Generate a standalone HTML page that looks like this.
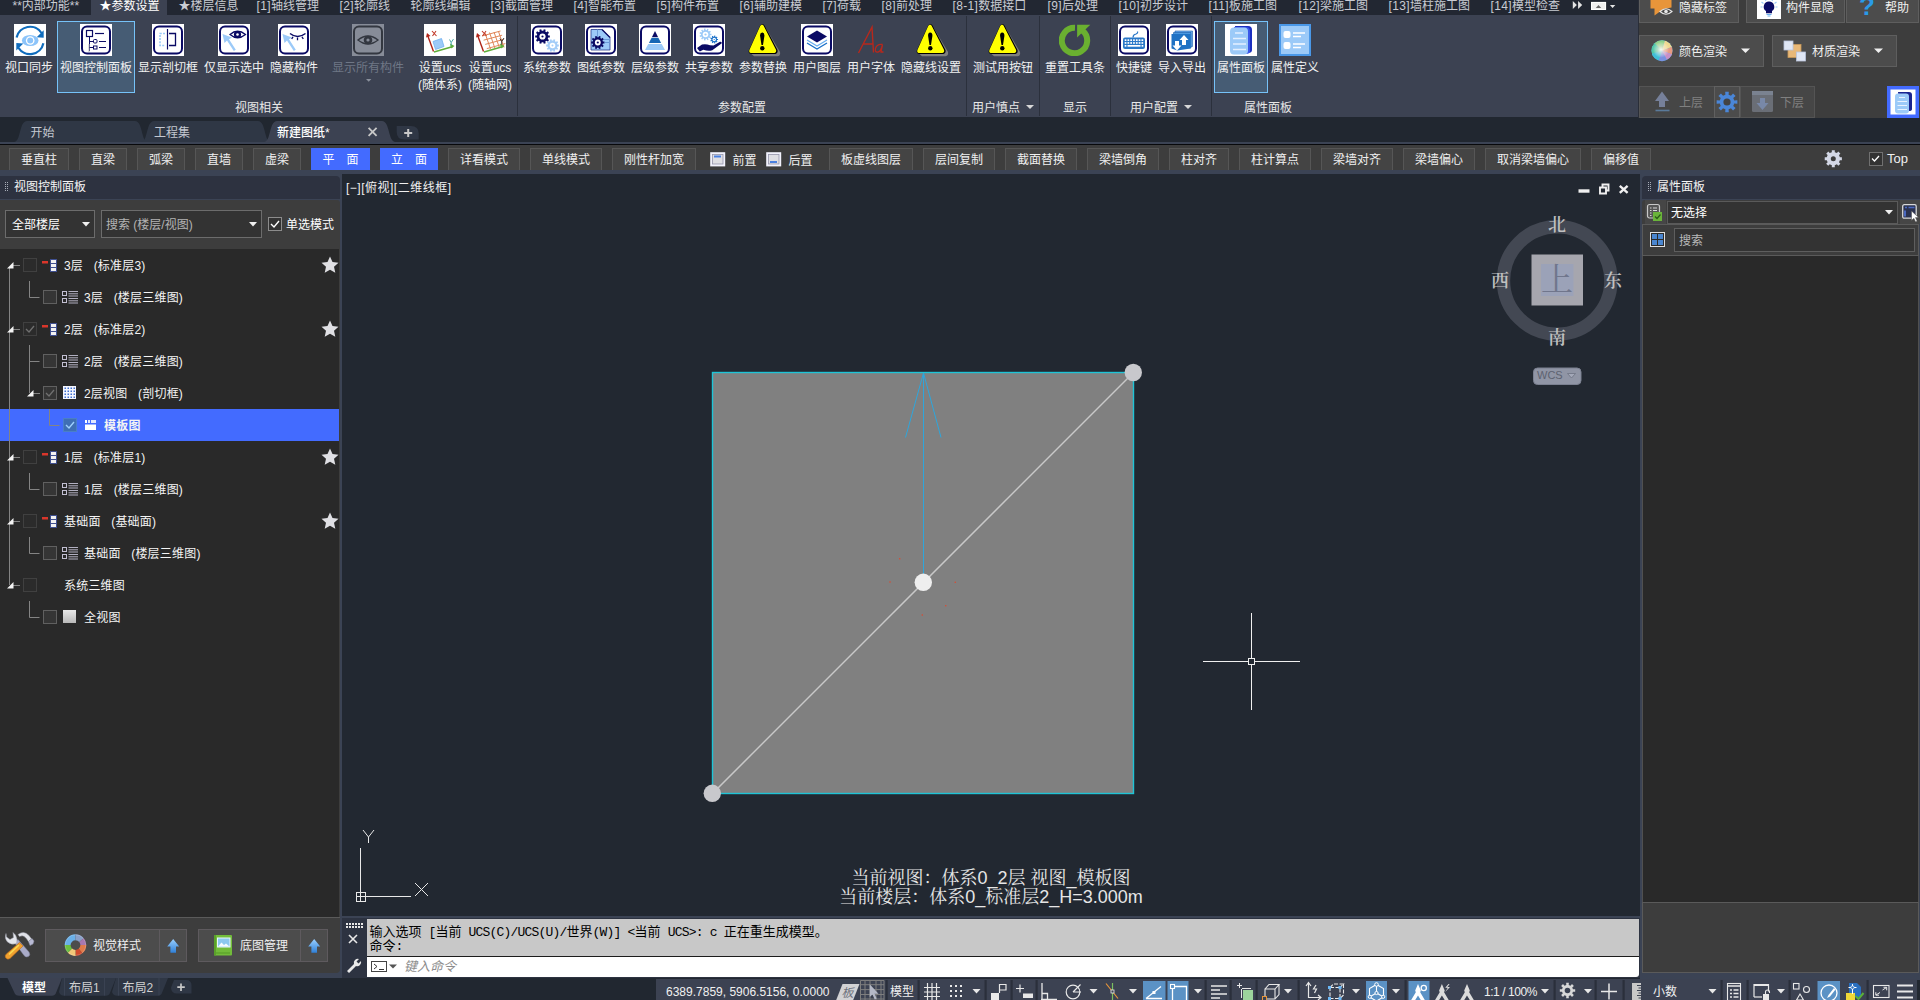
<!DOCTYPE html><html><head><meta charset="utf-8"><title>CAD</title><style>
*{box-sizing:border-box;margin:0;padding:0}
html,body{width:1920px;height:1000px;overflow:hidden;background:#222831}
body{font-family:"Liberation Sans","Noto Sans CJK SC",sans-serif;font-size:12px;color:#f0f0f0;position:relative;line-height:1}
.abs{position:absolute}
.t{position:absolute;white-space:nowrap;line-height:16px;height:16px}
.c{text-align:center}
#tabbar{left:0;top:0;width:1638px;height:15px;background:#222732}
#tabbar .t{top:-2px;color:#c9ccd3}
#ribbon{left:0;top:15px;width:1638px;height:102px;background:#3c4252}
.rb{position:absolute;top:9px;width:32px;height:32px}
.rl{position:absolute;top:45px;text-align:center;white-space:nowrap;line-height:17px;color:#f2f2f2;transform:translateX(-50%)}
.sep{position:absolute;top:1px;width:1.200px;height:100px;background:#2b303c}
.gl{position:absolute;top:85px;line-height:16px;white-space:nowrap;color:#e8e8e8;transform:translateX(-50%)}
.selbtn{position:absolute;background:#465c74;border:1px solid #76c2f8}
#quick{left:1638px;top:0;width:282px;height:118px;background:#3d3d3d;z-index:2;border-left:1px solid #2a2e38}
.qb{position:absolute;background:#4c4c4c;border:1px solid #5e5e5e}
.qd{background:#464646;border-color:#545454}
#doctabs{left:0;top:117px;width:1920px;height:25px;background:#212730}
#toolbar{left:0;top:142px;width:1920px;height:28px;background:#3d3d3d;border-top:2px solid #3b4354;overflow:hidden}
#toolbar:before{content:'';position:absolute;left:0;top:0;width:1920px;height:0.900px;background:#08090c}
.tb{position:absolute;top:4px;height:23px;background:#444;border:1px solid #565656;text-align:center;line-height:22px;color:#f0f0f0;white-space:nowrap}
.tb.blue{background:#436bff;border-color:#436bff;color:#fff}
.cb{position:absolute;width:14px;height:14px;border:1px solid #4a4a4a;background:#2a2a2a}
.row{position:absolute;left:0;width:340px;height:32px}
.row .t{top:8px;color:#f0f0f0}
</style></head><body>
<div id="tabbar" class="abs">
<div class="abs" style="left:91px;top:0;width:76px;height:15px;background:#3c4252"></div>
<span class="t" style="left:12.5px;color:#c9ccd3">**内部功能**</span>
<span class="t" style="left:99.5px;color:#ffffff">★参数设置</span>
<span class="t" style="left:178.5px;color:#c9ccd3">★楼层信息</span>
<span class="t" style="left:256.5px;color:#c9ccd3"><span style="letter-spacing:0.350px">[1]</span>轴线管理</span>
<span class="t" style="left:339.5px;color:#c9ccd3"><span style="letter-spacing:0.350px">[2]</span>轮廓线</span>
<span class="t" style="left:410.5px;color:#c9ccd3">轮廓线编辑</span>
<span class="t" style="left:490.5px;color:#c9ccd3"><span style="letter-spacing:0.350px">[3]</span>截面管理</span>
<span class="t" style="left:573.5px;color:#c9ccd3"><span style="letter-spacing:0.350px">[4]</span>智能布置</span>
<span class="t" style="left:656.5px;color:#c9ccd3"><span style="letter-spacing:0.350px">[5]</span>构件布置</span>
<span class="t" style="left:739.5px;color:#c9ccd3"><span style="letter-spacing:0.350px">[6]</span>辅助建模</span>
<span class="t" style="left:822.5px;color:#c9ccd3"><span style="letter-spacing:0.350px">[7]</span>荷载</span>
<span class="t" style="left:881.5px;color:#c9ccd3"><span style="letter-spacing:0.350px">[8]</span>前处理</span>
<span class="t" style="left:952.5px;color:#c9ccd3"><span style="letter-spacing:0.350px">[8-1]</span>数据接口</span>
<span class="t" style="left:1047.5px;color:#c9ccd3"><span style="letter-spacing:0.350px">[9]</span>后处理</span>
<span class="t" style="left:1118.5px;color:#c9ccd3"><span style="letter-spacing:0.350px">[10]</span>初步设计</span>
<span class="t" style="left:1208.5px;color:#c9ccd3"><span style="letter-spacing:0.350px">[11]</span>板施工图</span>
<span class="t" style="left:1298.5px;color:#c9ccd3"><span style="letter-spacing:0.350px">[12]</span>梁施工图</span>
<span class="t" style="left:1388.5px;color:#c9ccd3"><span style="letter-spacing:0.350px">[13]</span>墙柱施工图</span>
<span class="t" style="left:1490.5px;color:#c9ccd3"><span style="letter-spacing:0.350px">[14]</span>模型检查</span>
<svg class="abs" style="left:1570px;top:0" width="50" height="14"><path d="M2.800 1l4.100 4-4.100 4zM8.100 1l4.100 4-4.100 4z" fill="#e4e4e4"/><rect x="21" y="1.900" width="15.100" height="8.100" fill="#fff"/><rect x="22" y="2.900" width="13.100" height="6.100" fill="#f0f0f0"/><path d="M25.800 7.900l2.700-2.900 2.700 2.900z" fill="#666"/><path d="M39.900 5h5.400l-2.700 3.100z" fill="#e4e4e4"/></svg>
</div>
<div id="ribbon" class="abs">
<div class="selbtn" style="left:57px;top:6px;width:78px;height:72px"></div>
<div class="selbtn" style="left:1214px;top:6px;width:54px;height:72px"></div>
<svg class="abs" style="left:14px;top:9px" width="32" height="32" viewBox="0 0 32 32"><rect width="32" height="32" fill="#fff"/><path d="M2.600 13.600A13.700 13.700 0 0 1 27.500 9" fill="none" stroke="#0f6cbd" stroke-width="2.200"/><path d="M29.700 6.300v7.500l-7-.5z" fill="#0f6cbd"/><path d="M29.400 19.200A13.700 13.700 0 0 1 4.500 23.800" fill="none" stroke="#0f6cbd" stroke-width="2.200"/><path d="M2.300 26.500v-7.500l7 .5z" fill="#0f6cbd"/><ellipse cx="16.200" cy="16.500" rx="8.300" ry="5.500" fill="#8cc4fa"/><circle cx="16.200" cy="16.500" r="4.300" fill="#fff"/><circle cx="16.200" cy="16.500" r="3" fill="#8cc4fa"/></svg>
<svg class="abs" style="left:80px;top:9px" width="32" height="32" viewBox="0 0 32 32"><rect width="32" height="32" fill="#fff"/><rect x="2" y="2.500" width="28" height="27" rx="5" fill="#fff" stroke="#0a0a64" stroke-width="2"/><rect x="6.500" y="6.500" width="6" height="6" fill="#fff" stroke="#0a0a64" stroke-width="1.200"/><path d="M15 9.500h9" stroke="#0a0a64" stroke-width="1.200"/><path d="M9.500 13v14" stroke="#0a0a64" stroke-width="1"/><path d="M9 20v8" stroke="#bbb" stroke-width="1"/><path d="M9.500 17.500h4M9.500 23.500h4" stroke="#0a0a64"/><rect x="13.500" y="15.500" width="3.500" height="3.500" rx="1" fill="#fff" stroke="#0a0a64"/><rect x="13.500" y="22" width="3.500" height="3" fill="#fff" stroke="#0a0a64"/><path d="M19 17.500h7M19 23.500h7" stroke="#0a0a64" stroke-width="1.200"/></svg>
<svg class="abs" style="left:152px;top:9px" width="32" height="32" viewBox="0 0 32 32"><rect width="32" height="32" fill="#fff"/><rect x="2" y="2.500" width="28" height="27" rx="5" fill="#fff" stroke="#0a0a64" stroke-width="2"/><path d="M15.500 5v20.500" stroke="#0a0a64" stroke-width="1.200"/><path d="M17 9.500h6.500v12h-6.500" fill="none" stroke="#0a0a64" stroke-width="1.300"/><path d="M13 9.500h-5v12h5" fill="none" stroke="#9ccaf8" stroke-width="1.600" stroke-dasharray="2 1.200"/></svg>
<svg class="abs" style="left:218px;top:9px" width="32" height="32" viewBox="0 0 32 32"><rect width="32" height="32" fill="#fff"/><rect x="2" y="2.500" width="28" height="27" rx="5" fill="#fff" stroke="#0a0a64" stroke-width="2"/><path d="M4.500 10l9.500 3.500-3 1.800 6.800 10.500-2 1.300-6.800-10.500-2.500 2.400z" fill="#9ccaf8"/><path d="M12 10.500Q19.500 4 27.500 10.500Q19.500 17 12 10.500Z" fill="#fff" stroke="#0a0a64" stroke-width="1.300"/><circle cx="19.500" cy="10.500" r="3.600" fill="#0a0a64"/><circle cx="19.500" cy="10.500" r="1.300" fill="#fff"/></svg>
<svg class="abs" style="left:278px;top:9px" width="32" height="32" viewBox="0 0 32 32"><rect width="32" height="32" fill="#fff"/><rect x="2" y="2.500" width="28" height="27" rx="5" fill="#fff" stroke="#0a0a64" stroke-width="2"/><path d="M4.500 10l9.500 3.500-3 1.800 6.800 10.500-2 1.300-6.800-10.500-2.500 2.400z" fill="#9ccaf8"/><path d="M12 9.500Q19.500 15.500 27.500 9.500" fill="none" stroke="#0a0a64" stroke-width="1.500"/><path d="M15 12.800l-1.300 2.200M19.500 13.500v2.800M24 12.800l1.300 2.200" stroke="#0a0a64" stroke-width="1.300"/></svg>
<svg class="abs" style="left:352px;top:9px" width="32" height="32" viewBox="0 0 32 32"><rect width="32" height="32" fill="#878c98"/><rect x="2" y="2.500" width="28" height="27" rx="5" fill="#878c98" stroke="#333740" stroke-width="2"/><path d="M6 16Q16 8 26 16Q16 24 6 16Z" fill="#878c98" stroke="#333740" stroke-width="1.400"/><circle cx="16" cy="16" r="4.300" fill="#333740"/><circle cx="16" cy="16" r="1.600" fill="#878c98"/></svg>
<svg class="abs" style="left:424px;top:9px" width="32" height="32" viewBox="0 0 32 32"><rect width="32" height="32" fill="#fff"/><path d="M9.500 27.500L3.500 11" stroke="#b02418" stroke-width="1.400"/><path d="M2 13.500l1-4.500 3.500 3z" fill="#b02418"/><path d="M8 7l4.500 5M12 7l-3.500 5" stroke="#c23a2a" stroke-width="1.100"/><path d="M10 28L29 22.500" stroke="#5fae3a" stroke-width="1.500"/><path d="M30.500 22l-4.500-2.500 1 5z" fill="#5fae3a"/><path d="M25.500 15.500l1.700 3 2.300-3.500M27.200 18.500v3" fill="none" stroke="#3aa0a0" stroke-width="0.900"/><path d="M9 17.500l8.500-3 2.500 8-8.500 3z" fill="#9ccaf8" stroke="#6fb0f0" stroke-width="0.800"/></svg>
<svg class="abs" style="left:474px;top:9px" width="32" height="32" viewBox="0 0 32 32"><rect width="32" height="32" fill="#fff"/><g stroke="#e0875a" stroke-width="1"><path d="M11.0 9.0l5.500 16"/><path d="M15.5 8.5l5.500 16"/><path d="M20.0 8.0l5.500 16"/><path d="M24.5 7.5l5.500 16"/><path d="M8.0 12.0l18.500-5"/><path d="M9.6 16.2l18.500-5"/><path d="M11.2 20.4l18.500-5"/><path d="M12.8 24.6l18.500-5"/></g><path d="M9.500 27.500L3.500 11" stroke="#b02418" stroke-width="1.400"/><path d="M2 13.500l1-4.500 3.500 3z" fill="#b02418"/><path d="M8 7l4.500 5M12 7l-3.500 5" stroke="#c23a2a" stroke-width="1.100"/><path d="M10 28L29 22.500" stroke="#5fae3a" stroke-width="1.500"/><path d="M30.500 22l-4.500-2.500 1 5z" fill="#5fae3a"/><path d="M26 14.500l1.700 3 2.300-3.500M27.700 17.500v3" fill="none" stroke="#222" stroke-width="0.900"/></svg>
<svg class="abs" style="left:531px;top:9px" width="32" height="32" viewBox="0 0 32 32"><rect width="32" height="32" fill="#fff"/><rect x="2" y="2.500" width="28" height="27" rx="5" fill="#fff" stroke="#0a0a64" stroke-width="2"/><path d="M18.83 11.48L18.83 13.52L17.21 13.52L16.72 15.04L18.03 15.98L16.83 17.63L15.52 16.68L14.23 17.62L14.73 19.16L12.80 19.79L12.30 18.24L10.70 18.24L10.20 19.79L8.27 19.16L8.77 17.62L7.48 16.68L6.17 17.63L4.97 15.98L6.28 15.04L5.79 13.52L4.17 13.52L4.17 11.48L5.79 11.48L6.28 9.96L4.97 9.02L6.17 7.37L7.48 8.32L8.77 7.38L8.27 5.84L10.20 5.21L10.70 6.76L12.30 6.76L12.80 5.21L14.73 5.84L14.23 7.38L15.52 8.32L16.83 7.37L18.03 9.02L16.72 9.96L17.21 11.48Z" fill="#0a0a64"/><circle cx="11.5" cy="12.5" r="3.1" fill="#fff"/><circle cx="11.5" cy="12.5" r="1.1" fill="#0a0a64"/><path d="M27.84 20.62L27.84 22.38L26.42 22.38L26.00 23.69L27.15 24.51L26.11 25.94L24.97 25.10L23.85 25.91L24.30 27.26L22.62 27.80L22.19 26.45L20.81 26.45L20.38 27.80L18.70 27.26L19.15 25.91L18.03 25.10L16.89 25.94L15.85 24.51L17.00 23.69L16.58 22.38L15.16 22.38L15.16 20.62L16.58 20.62L17.00 19.31L15.85 18.49L16.89 17.06L18.03 17.90L19.15 17.09L18.70 15.74L20.38 15.20L20.81 16.55L22.19 16.55L22.62 15.20L24.30 15.74L23.85 17.09L24.97 17.90L26.11 17.06L27.15 18.49L26.00 19.31L26.42 20.62Z" fill="#a4cdf8"/><circle cx="21.5" cy="21.5" r="2.8" fill="#fff"/><circle cx="21.5" cy="21.5" r="1" fill="#a4cdf8"/></svg>
<svg class="abs" style="left:585px;top:9px" width="32" height="32" viewBox="0 0 32 32"><rect width="32" height="32" fill="#fff"/><rect x="2" y="2.500" width="28" height="27" rx="5" fill="#fff" stroke="#0a0a64" stroke-width="2"/><path d="M6 5.500h11l8 8v12.500h-19z" fill="#9ccaf8" stroke="#2a3a8a" stroke-width="0.800"/><path d="M12.500 5.500v10M6 15.500h19M20 18.500h5" stroke="#6a9ad8" stroke-width="1"/><path d="M17 5.500l8 8" stroke="#0a0a64" stroke-width="1.200"/><path d="M19.44 17.58L19.44 19.42L17.92 19.41L17.48 20.77L18.71 21.65L17.63 23.15L16.41 22.25L15.25 23.09L15.73 24.53L13.97 25.10L13.52 23.65L12.08 23.65L11.63 25.10L9.87 24.53L10.35 23.09L9.19 22.25L7.97 23.15L6.89 21.65L8.12 20.77L7.68 19.41L6.16 19.42L6.16 17.58L7.68 17.59L8.12 16.23L6.89 15.35L7.97 13.85L9.19 14.75L10.35 13.91L9.87 12.47L11.63 11.90L12.08 13.35L13.52 13.35L13.97 11.90L15.73 12.47L15.25 13.91L16.41 14.75L17.63 13.85L18.71 15.35L17.48 16.23L17.92 17.59Z" fill="#0a0a64"/><circle cx="12.8" cy="18.5" r="2.9" fill="#fff"/><circle cx="12.8" cy="18.5" r="1.1" fill="#0a0a64"/></svg>
<svg class="abs" style="left:639px;top:9px" width="32" height="32" viewBox="0 0 32 32"><rect width="32" height="32" fill="#fff"/><rect x="2" y="2.500" width="28" height="27" rx="5" fill="#fff" stroke="#0a0a64" stroke-width="2"/><path d="M16 7l3 6h-6z" fill="#0a0a64"/><path d="M12.500 14h7l2.600 5h-12.200z" fill="#1767b5"/><path d="M12.700 13.500h6.600" stroke="#b8c8e0"/><path d="M9.300 20h13.400l3.300 6h-20z" fill="#9ccaf8"/></svg>
<svg class="abs" style="left:693px;top:9px" width="32" height="32" viewBox="0 0 32 32"><rect width="32" height="32" fill="#fff"/><rect x="2" y="2.500" width="28" height="27" rx="5" fill="#fff" stroke="#0a0a64" stroke-width="2"/><path d="M18.45 9.75L18.45 11.25L16.94 11.22L16.62 12.30L17.91 13.09L17.10 14.35L15.85 13.50L15.00 14.24L15.66 15.60L14.29 16.23L13.69 14.84L12.58 15.00L12.40 16.50L10.91 16.29L11.16 14.80L10.13 14.33L9.17 15.49L8.03 14.51L9.05 13.39L8.44 12.44L7.00 12.90L6.58 11.46L8.04 11.06L8.04 9.94L6.58 9.54L7.00 8.10L8.44 8.56L9.05 7.61L8.03 6.49L9.17 5.51L10.13 6.67L11.16 6.20L10.91 4.71L12.40 4.50L12.58 6.00L13.69 6.16L14.29 4.77L15.66 5.40L15.00 6.76L15.85 7.50L17.10 6.65L17.91 7.91L16.62 8.70L16.94 9.78Z" fill="#9ccaf8"/><circle cx="12.5" cy="10.5" r="2.8" fill="#fff"/><circle cx="12.5" cy="10.5" r="1.1" fill="#9ccaf8"/><path d="M25.05 14.90L25.05 16.10L24.04 16.06L23.74 16.90L24.54 17.52L23.77 18.43L23.02 17.76L22.25 18.20L22.46 19.19L21.28 19.40L21.14 18.40L20.27 18.25L19.79 19.14L18.76 18.54L19.29 17.68L18.72 17.00L17.78 17.38L17.37 16.26L18.33 15.94L18.33 15.06L17.37 14.74L17.78 13.62L18.72 14.00L19.29 13.32L18.76 12.46L19.79 11.86L20.27 12.75L21.14 12.60L21.28 11.60L22.46 11.81L22.25 12.80L23.02 13.24L23.77 12.57L24.54 13.48L23.74 14.10L24.04 14.94Z" fill="#1a70c8"/><circle cx="21.2" cy="15.5" r="1.7" fill="#fff"/><circle cx="21.2" cy="15.5" r="0.6" fill="#1a70c8"/><path d="M4 24l5-3.500q4-1 8 .8l3.500.2 6.500-3.800q2-.3 1.800 1.500l-9.500 7q-4 1.500-9-.5l-3.500 1.800z" fill="#0a0a64"/></svg>
<svg class="abs" style="left:746.5px;top:9px" width="34" height="33" viewBox="0 0 34 33"><path d="M18.500 3.500L33 28Q33.600 31.800 30.500 32.300L7 32.300L4.500 30Z" fill="#808080"/><path d="M15 0.300Q16.500 -0.200 17.500 1.500L30.500 26Q31.200 29.500 28.500 30L4.500 30Q1 29.800 1.800 26.500L13 1.800Q13.800 0.500 15 0.300Z" fill="#000"/><path d="M14.600 0.800Q15.800 0.300 16.500 1.600L29 25.800Q29.800 28.600 27.500 29L3.800 29Q1.600 28.600 2.400 26L13.200 2Q13.800 1 14.600 0.800Z" fill="#ffff00"/><path d="M15.200 8.600Q12.800 8.800 13.100 12L14.500 21H16L17.400 12Q17.600 8.800 15.200 8.600Z" fill="#000"/><circle cx="15.300" cy="24.200" r="2.200" fill="#000"/></svg>
<svg class="abs" style="left:801px;top:9px" width="32" height="32" viewBox="0 0 32 32"><rect width="32" height="32" fill="#fff"/><rect x="2" y="2.500" width="28" height="27" rx="5" fill="#fff" stroke="#0a0a64" stroke-width="2"/><path d="M16 6.500l10 6-10 6-10-6z" fill="#0a0a64"/><path d="M6 16l10 6 10-6" fill="none" stroke="#6aaef0" stroke-width="1.300"/><path d="M6 19l10 6 10-6" fill="none" stroke="#1a70c8" stroke-width="1.300"/></svg>
<svg class="abs" style="left:855px;top:9px" width="32" height="32" viewBox="0 0 32 32"><path d="M3.500 29L17 3l1.500 25.500M8.500 20h9.500" fill="none" stroke="#b8281c" stroke-width="1.400"/><path d="M27.500 20.500q-5.500-1-7 4-1 4 2.500 3.500 3-.5 4.500-7.500l-1.500 7.500h2.500" fill="none" stroke="#b8281c" stroke-width="1.300"/></svg>
<svg class="abs" style="left:914.5px;top:9px" width="34" height="33" viewBox="0 0 34 33"><path d="M18.500 3.500L33 28Q33.600 31.800 30.500 32.300L7 32.300L4.500 30Z" fill="#808080"/><path d="M15 0.300Q16.500 -0.200 17.500 1.500L30.500 26Q31.200 29.500 28.500 30L4.500 30Q1 29.800 1.800 26.500L13 1.800Q13.800 0.500 15 0.300Z" fill="#000"/><path d="M14.600 0.800Q15.800 0.300 16.500 1.600L29 25.800Q29.800 28.600 27.500 29L3.800 29Q1.600 28.600 2.400 26L13.200 2Q13.800 1 14.600 0.800Z" fill="#ffff00"/><path d="M15.200 8.600Q12.800 8.800 13.100 12L14.500 21H16L17.400 12Q17.600 8.800 15.200 8.600Z" fill="#000"/><circle cx="15.300" cy="24.200" r="2.200" fill="#000"/></svg>
<svg class="abs" style="left:986.5px;top:9px" width="34" height="33" viewBox="0 0 34 33"><path d="M18.500 3.500L33 28Q33.600 31.800 30.500 32.300L7 32.300L4.500 30Z" fill="#808080"/><path d="M15 0.300Q16.500 -0.200 17.500 1.500L30.500 26Q31.200 29.500 28.500 30L4.500 30Q1 29.800 1.800 26.500L13 1.800Q13.800 0.500 15 0.300Z" fill="#000"/><path d="M14.600 0.800Q15.800 0.300 16.500 1.600L29 25.800Q29.800 28.600 27.500 29L3.800 29Q1.600 28.600 2.400 26L13.200 2Q13.800 1 14.600 0.800Z" fill="#ffff00"/><path d="M15.200 8.600Q12.800 8.800 13.100 12L14.500 21H16L17.400 12Q17.600 8.800 15.200 8.600Z" fill="#000"/><circle cx="15.300" cy="24.200" r="2.200" fill="#000"/></svg>
<svg class="abs" style="left:1059px;top:9px" width="32" height="32" viewBox="0 0 32 32"><path d="M16 3.800A12.700 12.700 0 1 0 23.660 6.770" fill="none" stroke="#6ab030" stroke-width="6"/><path d="M18.100 0.800h13.200l-13.200 12.600z" fill="#6ab030"/></svg>
<svg class="abs" style="left:1118px;top:9px" width="32" height="32" viewBox="0 0 32 32"><rect width="32" height="32" fill="#fff"/><rect x="2" y="2.500" width="28" height="27" rx="5" fill="#fff" stroke="#0a0a64" stroke-width="2"/><rect x="5" y="13.500" width="22" height="11.500" rx="2" fill="#2a78c8"/><path d="M15 13.500q0-3 3-3.500 2-.5 1.500-2.500" fill="none" stroke="#2a78c8" stroke-width="1.200"/><g fill="#fff"><rect x="6.7" y="15.3" width="1.700" height="1.700"/><rect x="9.5" y="15.3" width="1.700" height="1.700"/><rect x="12.3" y="15.3" width="1.700" height="1.700"/><rect x="15.1" y="15.3" width="1.700" height="1.700"/><rect x="17.9" y="15.3" width="1.700" height="1.700"/><rect x="20.7" y="15.3" width="1.700" height="1.700"/><rect x="23.5" y="15.3" width="1.700" height="1.700"/><rect x="6.7" y="18.1" width="1.700" height="1.700"/><rect x="9.5" y="18.1" width="1.700" height="1.700"/><rect x="12.3" y="18.1" width="1.700" height="1.700"/><rect x="15.1" y="18.1" width="1.700" height="1.700"/><rect x="17.9" y="18.1" width="1.700" height="1.700"/><rect x="20.7" y="18.1" width="1.700" height="1.700"/><rect x="23.5" y="18.1" width="1.700" height="1.700"/><rect x="6.700" y="21" width="1.700" height="1.700"/><rect x="9.500" y="21" width="13" height="1.700"/><rect x="23.600" y="21" width="1.700" height="1.700"/></g></svg>
<svg class="abs" style="left:1166px;top:9px" width="32" height="32" viewBox="0 0 32 32"><rect width="32" height="32" fill="#fff"/><rect x="2" y="2.500" width="28" height="27" rx="5" fill="#fff" stroke="#0a0a64" stroke-width="2"/><path d="M9 7h17.500v15.500l-17.500 0z" fill="#6fb0f0" stroke="#1a5aa8" stroke-width="0.600"/><path d="M7.500 8.500h17.500v15.500l-17.500 0z" fill="#4a98e0" stroke="#1a5aa8" stroke-width="0.600"/><path d="M5.500 10h19v14.500l-13 2-6-2z" fill="#1f72c4"/><path d="M18 11l4.500 5h-2.500v5h-4v-5h-2.500z" fill="#fff"/><path d="M11 26.500l-4.500-5h2.500v-4.500h4v4.500h2.500z" fill="#fff"/></svg>
<svg class="abs" style="left:1225px;top:9px" width="32" height="32" viewBox="0 0 32 32"><rect width="32" height="32" fill="#fff"/><path d="M10 2h13q4 0 4 4v20q0 3-4 3h-10z" fill="#1a2fc0"/><path d="M9 3h12q4 0 4 4v20q0 3-4 3h-10z" fill="#3a58e8"/><rect x="5" y="3.500" width="18" height="27" rx="4" fill="#9ccaf8"/><path d="M10 9h8M8 14.500h13M8 20h13M8 25.500h13" stroke="#e4f0ff" stroke-width="1.300"/></svg>
<svg class="abs" style="left:1279px;top:9px" width="32" height="32" viewBox="0 0 32 32"><rect width="32" height="32" fill="#9ccaf8"/><rect x="1" y="1" width="30" height="30" fill="none" stroke="#4a98e8" stroke-width="2"/><rect x="4.500" y="7" width="7" height="7" rx="2" fill="#fff"/><rect x="4.500" y="18" width="7" height="7" rx="2" fill="#fff"/><path d="M14 9h12M14 12.500h8M14 20h12M14 23.500h8" stroke="#fff" stroke-width="1.600"/></svg>
<div class="rl" style="left:29px;">视口同步</div>
<div class="rl" style="left:96px;">视图控制面板</div>
<div class="rl" style="left:168px;">显示剖切框</div>
<div class="rl" style="left:234px;">仅显示选中</div>
<div class="rl" style="left:294px;">隐藏构件</div>
<div class="rl" style="left:368px;color:#6f7786">显示所有构件</div>
<div class="rl" style="left:440px;">设置ucs<br>(随体系)</div>
<div class="rl" style="left:490px;">设置ucs<br>(随轴网)</div>
<div class="rl" style="left:547px;">系统参数</div>
<div class="rl" style="left:601px;">图纸参数</div>
<div class="rl" style="left:655px;">层级参数</div>
<div class="rl" style="left:709px;">共享参数</div>
<div class="rl" style="left:763px;">参数替换</div>
<div class="rl" style="left:817px;">用户图层</div>
<div class="rl" style="left:871px;">用户字体</div>
<div class="rl" style="left:931px;">隐藏线设置</div>
<div class="rl" style="left:1003px;">测试用按钮</div>
<div class="rl" style="left:1075px;">重置工具条</div>
<div class="rl" style="left:1134px;">快捷键</div>
<div class="rl" style="left:1182px;">导入导出</div>
<div class="rl" style="left:1241px;">属性面板</div>
<div class="rl" style="left:1295px;">属性定义</div>
<svg class="abs" style="left:365.500px;top:64px" width="6" height="4"><path d="M0 0h5.400l-2.700 2.800z" fill="#8a909c"/></svg>
<div class="sep" style="left:517px"></div>
<div class="sep" style="left:966px"></div>
<div class="sep" style="left:1039px"></div>
<div class="sep" style="left:1110px"></div>
<div class="sep" style="left:1211px"></div>
<div class="gl" style="left:259px">视图相关</div>
<div class="gl" style="left:742px">参数配置</div>
<div class="gl" style="left:996px">用户慎点</div>
<div class="gl" style="left:1075px">显示</div>
<div class="gl" style="left:1154px">用户配置</div>
<div class="gl" style="left:1268px">属性面板</div>
<svg class="abs" style="left:1026px;top:90px" width="8" height="5"><path d="M0 0h8l-4 4z" fill="#d8d8d8"/></svg>
<svg class="abs" style="left:1184px;top:90px" width="8" height="5"><path d="M0 0h8l-4 4z" fill="#d8d8d8"/></svg>
</div>
<div id="quick" class="abs">
<div class="qb" style="left:0px;top:-2px;width:99.500px;height:25px"></div><span class="t" style="left:40px;top:0px">隐藏标签</span>
<div class="qb" style="left:107px;top:-2px;width:98.500px;height:25px"></div><span class="t" style="left:147px;top:0px">构件显隐</span>
<div class="qb" style="left:207px;top:-2px;width:73px;height:25px"></div><span class="t" style="left:246px;top:0px">帮助</span>
<div class="qb" style="left:0px;top:35px;width:125px;height:32px"></div><span class="t" style="left:40px;top:44px">颜色渲染</span>
<div class="qb" style="left:133px;top:35px;width:125px;height:32px"></div><span class="t" style="left:173px;top:44px">材质渲染</span>
<div class="qb qd" style="left:0px;top:86px;width:75.500px;height:32px"></div><span class="t" style="left:40px;top:95px;color:#808080">上层</span>
<div class="qb" style="left:75px;top:86px;width:26px;height:32px;border-color:#606060"></div>
<div class="qb qd" style="left:101px;top:86px;width:75px;height:32px"></div><span class="t" style="left:141px;top:95px;color:#808080">下层</span>
<div class="abs" style="left:248px;top:86px;width:32px;height:32px;background:#436bff"></div>
<svg class="abs" style="left:-1px;top:0" width="282" height="118">
<path d="M12.500 0h21v7.500l-8 1.500-9 6.500v-7h-4z" fill="#e8953a"/>
<path d="M22 11.500q6-5.500 12 0q-6 5.500-12 0z" fill="#4a4a4a" stroke="#e8e8e8" stroke-width="1.100"/><circle cx="28" cy="11.500" r="1.800" fill="#e8e8e8"/>
<rect x="119" y="0" width="24" height="19" fill="#fff"/><path d="M131 1.500a5.200 5.200 0 0 1 3 9.500v2.200h-6v-2.200a5.200 5.200 0 0 1 3-9.500z" fill="#0a0a64"/><path d="M128.500 14.500h5M129.500 16h3" stroke="#6aaef0" stroke-width="1"/><path d="M123.500 2l2 1.500M138.500 2l-2 1.500M122.500 7h2M139.500 7h-2M127.500 0l.5 1M134.500 0l-.5 1" stroke="#9ccaf8" stroke-width="1.200"/>
<defs><radialGradient id="cb1" cx="0.45" cy="0.45" r="0.55"><stop offset="0" stop-color="#fff" stop-opacity="0.950"/><stop offset="0.300" stop-color="#f4ecdc" stop-opacity="0.600"/><stop offset="0.700" stop-color="#fff" stop-opacity="0"/></radialGradient><clipPath id="cbc"><circle cx="24" cy="50.700" r="10.500"/></clipPath></defs>
<g clip-path="url(#cbc)"><rect x="13" y="40" width="22" height="22" fill="#58b8e8"/><path d="M24 50.700L13 40h14z" fill="#8fd08a"/><path d="M24 50.700L27 40h9v6z" fill="#f0d890"/><path d="M24 50.700L36 46v9z" fill="#e89a80"/><path d="M24 50.700L36 55v7h-6z" fill="#c890c8"/><path d="M24 50.700L30 62h-10z" fill="#7a90e0"/><path d="M24 50.700L20 62h-7v-8z" fill="#40c0d8"/><path d="M24 50.700L13 54v-14z" fill="#50c8a8"/><circle cx="24" cy="50.700" r="10.500" fill="url(#cb1)"/></g>
<rect x="150" y="44.500" width="13" height="13" fill="#e8b878" stroke="#c89858" stroke-width="0.800"/><rect x="146" y="41" width="9" height="9" fill="#dfe6f4" stroke="#b8c4dc" stroke-width="0.800"/><rect x="158.500" y="52" width="9" height="9" fill="#dfe6f4" stroke="#b8c4dc" stroke-width="0.800"/>
<path d="M103 48.500h9l-4.500 4.500z" fill="#f0f0f0"/><path d="M236 48.500h9l-4.500 4.500z" fill="#f0f0f0"/>
<path d="M24 91.500l7 9.500h-4v6h-6v-6h-4z" fill="#76809a"/><path d="M17.500 110.500h14" stroke="#5a7a9a" stroke-width="1.600"/>
<path d="M99.34 100.19L99.34 103.81L96.22 103.61L95.25 105.97L97.59 108.04L95.04 110.59L92.97 108.25L90.61 109.22L90.81 112.34L87.19 112.34L87.39 109.22L85.03 108.25L82.96 110.59L80.41 108.04L82.75 105.97L81.78 103.61L78.66 103.81L78.66 100.19L81.78 100.39L82.75 98.03L80.41 95.96L82.96 93.41L85.03 95.75L87.39 94.78L87.19 91.66L90.81 91.66L90.61 94.78L92.97 95.75L95.04 93.41L97.59 95.96L95.25 98.03L96.22 100.39Z" fill="#4a86d8"/><circle cx="89" cy="102" r="3.6" fill="#434343"/>
<rect x="114" y="91" width="21" height="21" rx="1.500" fill="#6a6e76"/><rect x="114" y="91" width="21" height="4" fill="#7a8290"/><path d="M124.500 110l-6-7h3.500v-5h5v5h3.500z" fill="#7888a8"/>
<rect x="252.500" y="89.500" width="25" height="25" fill="#fff"/><path d="M260 92h11q3 0 3 3v14q0 2-3 2h-9z" fill="#1a2490"/><rect x="257" y="93.500" width="14" height="20" rx="3" fill="#9ccaf8"/><path d="M261 97.500h6M259.500 101.500h9.500M259.500 105.500h9.500M259.500 109.500h9.500" stroke="#e8f2ff" stroke-width="1"/>
</svg>
<span class="t" style="left:220px;top:-7px;font-size:26px;line-height:26px;height:26px;font-weight:bold;color:#2a9ae8">?</span>
</div>
<div id="doctabs" class="abs">
<svg class="abs" style="left:0;top:0" width="460" height="28"><path d="M14 25 C21 25 19 4 27 4 L135 4 C143 4 141 25 148 25 Z" fill="#2f3745"/><path d="M141 25 C148 25 146 4 154 4 L258 4 C266 4 264 25 271 25 Z" fill="#2f3745"/><path d="M264 25 C271 25 269 4 277 4 L382 4 C390 4 388 25 395.500 25 Z" fill="#3c4252"/><path d="M396.700 9L411 9Q418.700 9 418.700 16.500L418.700 22.600L404.500 22.600Q396.700 22.600 396.700 15Z" fill="#2f3745"/><path d="M368.600 10.800l8 8M376.600 10.800l-8 8" stroke="#c8c8c8" stroke-width="1.800"/><path d="M404.200 16h8M408.200 12v8" stroke="#c8c8c8" stroke-width="2"/></svg>
<span class="t" style="left:30.500px;top:7.700px;color:#c4c8d0">开始</span>
<span class="t" style="left:154px;top:7.700px;color:#c4c8d0">工程集</span>
<span class="t" style="left:277px;top:7.700px;color:#fff;font-weight:500">新建图纸*</span>
</div>
<div id="toolbar" class="abs">
<div class="tb" style="left:9px;width:60px">垂直柱</div>
<div class="tb" style="left:79px;width:48px">直梁</div>
<div class="tb" style="left:137px;width:48px">弧梁</div>
<div class="tb" style="left:195px;width:48px">直墙</div>
<div class="tb" style="left:253px;width:48px">虚梁</div>
<div class="tb blue" style="left:311px;width:59px">平&emsp;面</div>
<div class="tb blue" style="left:380px;width:58px">立&emsp;面</div>
<div class="tb" style="left:448px;width:72px">详看模式</div>
<div class="tb" style="left:530px;width:72px">单线模式</div>
<div class="tb" style="left:612px;width:84px">刚性杆加宽</div>
<div class="tb" style="left:829px;width:84px">板虚线图层</div>
<div class="tb" style="left:923px;width:72px">层间复制</div>
<div class="tb" style="left:1005px;width:72px">截面替换</div>
<div class="tb" style="left:1087px;width:72px">梁墙倒角</div>
<div class="tb" style="left:1169px;width:60px">柱对齐</div>
<div class="tb" style="left:1239px;width:72px">柱计算点</div>
<div class="tb" style="left:1321px;width:72px">梁墙对齐</div>
<div class="tb" style="left:1403px;width:72px">梁墙偏心</div>
<div class="tb" style="left:1485px;width:96px">取消梁墙偏心</div>
<div class="tb" style="left:1591px;width:60px">偏移值</div>
<svg class="abs" style="left:710px;top:8px" width="16" height="16"><rect x="0.200" y="0.200" width="15" height="14.200" fill="#f2f2fc"/><rect x="2.500" y="2.500" width="10.500" height="9.500" fill="#dfdfe4" stroke="#9494aa" stroke-width="0.800"/><rect x="4" y="3.500" width="7" height="2" fill="#4a80e0"/></svg>
<span class="t" style="left:732.500px;top:9px">前置</span>
<svg class="abs" style="left:766px;top:8px" width="16" height="16"><rect x="0.200" y="0.200" width="15" height="14.200" fill="#f2f2fc"/><rect x="2.500" y="2.500" width="10.500" height="9.500" fill="#dfdfe4" stroke="#9494aa" stroke-width="0.800"/><rect x="4" y="9" width="7" height="2" fill="#4a80e0"/></svg>
<span class="t" style="left:788.500px;top:9px">后置</span>
<svg class="abs" style="left:1822px;top:4px" width="22" height="22"><path d="M19.87 9.20L19.87 12.20L17.84 12.16L16.96 14.29L18.42 15.70L16.30 17.82L14.89 16.36L12.76 17.24L12.80 19.27L9.80 19.27L9.84 17.24L7.71 16.36L6.30 17.82L4.18 15.70L5.64 14.29L4.76 12.16L2.73 12.20L2.73 9.20L4.76 9.24L5.64 7.11L4.18 5.70L6.30 3.58L7.71 5.04L9.84 4.16L9.80 2.13L12.80 2.13L12.76 4.16L14.89 5.04L16.30 3.58L18.42 5.70L16.96 7.11L17.84 9.24Z" fill="#d4d8e6"/><circle cx="11.3" cy="10.7" r="2.5" fill="#3d3d3d"/></svg>
<div class="abs" style="left:1869px;top:8px;width:13.700px;height:13.700px;border:1px solid #707070;background:#333"></div><svg class="abs" style="left:1869px;top:8px" width="13" height="13"><path d="M3 6.500l2.500 2.500 4.500-5" stroke="#fff" stroke-width="1.300" fill="none"/></svg>
<span class="t" style="left:1887px;top:7px;font-size:13px">Top</span>
</div>
<div class="abs" style="left:0;top:170px;width:1920px;height:4px;background:#3b4354"></div>
<div class="abs" style="left:0;top:170px;width:342px;height:748px;background:#3b4354"></div>
<div class="abs" style="left:0;top:176px;width:339.500px;height:22.500px;background:#2d3240;border-radius:0 4px 0 0"></div>
<svg class="abs" style="left:4px;top:181px" width="6" height="12"><g fill="#a8adb8"><rect x="1" y="1" width="1" height="1"/><rect x="3" y="1" width="1" height="1"/><rect x="1" y="3" width="1" height="1"/><rect x="3" y="3" width="1" height="1"/><rect x="1" y="5" width="1" height="1"/><rect x="3" y="5" width="1" height="1"/><rect x="1" y="7" width="1" height="1"/><rect x="3" y="7" width="1" height="1"/><rect x="1" y="9" width="1" height="1"/><rect x="3" y="9" width="1" height="1"/></g></svg>
<span class="t" style="left:14px;top:179px;color:#f4f4f4">视图控制面板</span>
<div class="abs" style="left:0;top:199.500px;width:340px;height:718.500px;background:#3d3d3d;border-radius:0 3px 0 0"></div>
<div class="abs" style="left:5px;top:210px;width:90px;height:28px;border:1px solid #6c6c6c;background:#333"></div>
<span class="t" style="left:12px;top:217px;color:#fff">全部楼层</span>
<svg class="abs" style="left:82px;top:221.500px" width="8" height="5"><path d="M0 0h8l-4 4.500z" fill="#f0f0f0"/></svg>
<div class="abs" style="left:101px;top:210px;width:161px;height:28px;border:1px solid #6c6c6c;background:#333"></div>
<span class="t" style="left:106px;top:217px;color:#b4b4b4">搜索 (楼层/视图)</span>
<svg class="abs" style="left:249px;top:221.500px" width="8" height="5"><path d="M0 0h8l-4 4.500z" fill="#f0f0f0"/></svg>
<div class="abs" style="left:268px;top:217px;width:14px;height:14px;border:1px solid #8c8c8c;background:#333"></div><svg class="abs" style="left:268px;top:217px" width="14" height="14"><path d="M3 7l3 3 5-6" stroke="#fff" stroke-width="1.400" fill="none"/></svg>
<span class="t" style="left:286px;top:217px;color:#fff">单选模式</span>
<div class="abs" style="left:0;top:249px;width:338.800px;height:668px;background:#292929"></div>
<div class="abs" style="left:0;top:409px;width:338.800px;height:32px;background:#436bff"></div>
<svg class="abs" style="left:0;top:249px" width="120" height="400" fill="none" stroke="#848484" stroke-width="1"><path d="M9.500 19v317"/><path d="M13 16.500h7M13 80.500h7M13 208.500h7M13 272.500h7M13 336.500h7"/><path d="M29.500 32v16.500h10M29.500 96v48M29.500 112.500h10M33 144.500h7M29.500 224v16.500h10M29.500 288v16.500h10M29.500 352v16.500h10"/><path d="M49.500 160v16.500h10"/></svg>
<svg class="abs" style="left:7px;top:261.5px" width="7" height="7"><path d="M6.500 0v6.500h-6.500z" fill="#f4f4f4"/></svg>
<div class="cb" style="left:23px;top:258px;border-color:#404040;background:#2b2b2b"></div>
<svg class="abs" style="left:42px;top:258.7px" width="16" height="14"><rect x="0" y="2" width="6" height="2.500" fill="#d9362b"/><rect x="8" y="0" width="7" height="13" fill="#3f4f8f"/><rect x="9" y="1" width="5" height="3" fill="#f2f2f2"/><rect x="9" y="5" width="5" height="3" fill="#f2f2f2"/><rect x="9" y="9" width="5" height="3" fill="#f2f2f2"/></svg>
<span class="t" style="left:64px;top:257.8px;color:#f4f4f4;letter-spacing:0.200px">3层 &nbsp;&nbsp;(标准层3)</span>
<svg class="abs" style="left:320.500px;top:256px" width="18" height="17"><path d="M9 0.500l2.500 5.600 6 .6-4.500 4.100 1.300 6-5.300-3.100-5.300 3.100 1.300-6L0.500 6.700l6-.6z" fill="#e0e0e4"/></svg>
<div class="cb" style="left:43px;top:290px;border-color:#606060;background:#353535"></div>
<svg class="abs" style="left:62px;top:290.5px" width="17" height="13" fill="none" stroke="#c2bfd2"><rect x="0.500" y="0.500" width="4" height="4"/><rect x="0.500" y="7.500" width="4" height="4"/><path d="M6.500 0.500h9.500M6.500 2.800h9.500M6.500 5h9.500M6.500 7.500h9.500M6.500 9.800h9.500M6.500 12h9.500" stroke-width="0.900"/></svg>
<span class="t" style="left:84px;top:289.8px;color:#f4f4f4;letter-spacing:0.200px">3层 &nbsp;&nbsp;(楼层三维图)</span>
<svg class="abs" style="left:7px;top:325.5px" width="7" height="7"><path d="M6.500 0v6.500h-6.500z" fill="#f4f4f4"/></svg>
<div class="cb" style="left:23px;top:322px;border-color:#404040;background:#2b2b2b"></div><svg class="abs" style="left:23px;top:322px" width="14" height="14"><path d="M3 7l3 3 5-6" stroke="#707070" stroke-width="1.300" fill="none"/></svg>
<svg class="abs" style="left:42px;top:322.7px" width="16" height="14"><rect x="0" y="2" width="6" height="2.500" fill="#d9362b"/><rect x="8" y="0" width="7" height="13" fill="#3f4f8f"/><rect x="9" y="1" width="5" height="3" fill="#f2f2f2"/><rect x="9" y="5" width="5" height="3" fill="#f2f2f2"/><rect x="9" y="9" width="5" height="3" fill="#f2f2f2"/></svg>
<span class="t" style="left:64px;top:321.8px;color:#f4f4f4;letter-spacing:0.200px">2层 &nbsp;&nbsp;(标准层2)</span>
<svg class="abs" style="left:320.500px;top:320px" width="18" height="17"><path d="M9 0.500l2.500 5.600 6 .6-4.500 4.100 1.300 6-5.300-3.100-5.300 3.100 1.300-6L0.500 6.700l6-.6z" fill="#e0e0e4"/></svg>
<div class="cb" style="left:43px;top:354px;border-color:#606060;background:#353535"></div>
<svg class="abs" style="left:62px;top:354.5px" width="17" height="13" fill="none" stroke="#c2bfd2"><rect x="0.500" y="0.500" width="4" height="4"/><rect x="0.500" y="7.500" width="4" height="4"/><path d="M6.500 0.500h9.500M6.500 2.800h9.500M6.500 5h9.500M6.500 7.500h9.500M6.500 9.800h9.500M6.500 12h9.500" stroke-width="0.900"/></svg>
<span class="t" style="left:84px;top:353.8px;color:#f4f4f4;letter-spacing:0.200px">2层 &nbsp;&nbsp;(楼层三维图)</span>
<svg class="abs" style="left:27px;top:389.5px" width="7" height="7"><path d="M6.500 0v6.500h-6.500z" fill="#f4f4f4"/></svg>
<div class="cb" style="left:43px;top:386px;border-color:#606060;background:#353535"></div><svg class="abs" style="left:43px;top:386px" width="14" height="14"><path d="M3 7l3 3 5-6" stroke="#707070" stroke-width="1.300" fill="none"/></svg>
<svg class="abs" style="left:63px;top:386px" width="13" height="13"><rect width="13" height="13" fill="#f4f6ff"/><g fill="#3f6fd0"><rect x="1.5" y="1.5" width="1.500" height="1.500"/><rect x="1.5" y="4.5" width="1.500" height="1.500"/><rect x="1.5" y="7.5" width="1.500" height="1.500"/><rect x="1.5" y="10.5" width="1.500" height="1.500"/><rect x="4.5" y="1.5" width="1.500" height="1.500"/><rect x="4.5" y="4.5" width="1.500" height="1.500"/><rect x="4.5" y="7.5" width="1.500" height="1.500"/><rect x="4.5" y="10.5" width="1.500" height="1.500"/><rect x="7.5" y="1.5" width="1.500" height="1.500"/><rect x="7.5" y="4.5" width="1.500" height="1.500"/><rect x="7.5" y="7.5" width="1.500" height="1.500"/><rect x="7.5" y="10.5" width="1.500" height="1.500"/><rect x="10.5" y="1.5" width="1.500" height="1.500"/><rect x="10.5" y="4.5" width="1.500" height="1.500"/><rect x="10.5" y="7.5" width="1.500" height="1.500"/><rect x="10.5" y="10.5" width="1.500" height="1.500"/></g></svg>
<span class="t" style="left:84px;top:385.8px;color:#f4f4f4;letter-spacing:0.200px">2层视图 &nbsp;&nbsp;(剖切框)</span>
<div class="abs" style="left:63px;top:418px;width:14px;height:14px;background:#3f6fb5;border:1px solid #4a7fc8"></div><svg class="abs" style="left:63px;top:418px" width="14" height="14"><path d="M3 7l3 3 5-6" stroke="#9fd0ff" stroke-width="1.400" fill="none"/></svg>
<svg class="abs" style="left:85px;top:420px" width="11" height="10"><rect x="0" y="0" width="2" height="3" fill="#fff"/><rect x="3" y="0" width="2" height="3" fill="#dfe6ff"/><rect x="6" y="0" width="5" height="3" fill="#dfe6ff"/><rect x="0" y="4.500" width="11" height="5.500" fill="#fff"/></svg>
<span class="t" style="left:104px;top:417.8px;font-weight:bold;color:#f4f4f4;letter-spacing:0.200px">模板图</span>
<svg class="abs" style="left:7px;top:453.5px" width="7" height="7"><path d="M6.500 0v6.500h-6.500z" fill="#f4f4f4"/></svg>
<div class="cb" style="left:23px;top:450px;border-color:#404040;background:#2b2b2b"></div>
<svg class="abs" style="left:42px;top:450.7px" width="16" height="14"><rect x="0" y="2" width="6" height="2.500" fill="#d9362b"/><rect x="8" y="0" width="7" height="13" fill="#3f4f8f"/><rect x="9" y="1" width="5" height="3" fill="#f2f2f2"/><rect x="9" y="5" width="5" height="3" fill="#f2f2f2"/><rect x="9" y="9" width="5" height="3" fill="#f2f2f2"/></svg>
<span class="t" style="left:64px;top:449.8px;color:#f4f4f4;letter-spacing:0.200px">1层 &nbsp;&nbsp;(标准层1)</span>
<svg class="abs" style="left:320.500px;top:448px" width="18" height="17"><path d="M9 0.500l2.500 5.600 6 .6-4.500 4.100 1.300 6-5.300-3.100-5.300 3.100 1.300-6L0.500 6.700l6-.6z" fill="#e0e0e4"/></svg>
<div class="cb" style="left:43px;top:482px;border-color:#606060;background:#353535"></div>
<svg class="abs" style="left:62px;top:482.5px" width="17" height="13" fill="none" stroke="#c2bfd2"><rect x="0.500" y="0.500" width="4" height="4"/><rect x="0.500" y="7.500" width="4" height="4"/><path d="M6.500 0.500h9.500M6.500 2.800h9.500M6.500 5h9.500M6.500 7.500h9.500M6.500 9.800h9.500M6.500 12h9.500" stroke-width="0.900"/></svg>
<span class="t" style="left:84px;top:481.8px;color:#f4f4f4;letter-spacing:0.200px">1层 &nbsp;&nbsp;(楼层三维图)</span>
<svg class="abs" style="left:7px;top:517.5px" width="7" height="7"><path d="M6.500 0v6.500h-6.500z" fill="#f4f4f4"/></svg>
<div class="cb" style="left:23px;top:514px;border-color:#404040;background:#2b2b2b"></div>
<svg class="abs" style="left:42px;top:514.7px" width="16" height="14"><rect x="0" y="2" width="6" height="2.500" fill="#d9362b"/><rect x="8" y="0" width="7" height="13" fill="#3f4f8f"/><rect x="9" y="1" width="5" height="3" fill="#f2f2f2"/><rect x="9" y="5" width="5" height="3" fill="#f2f2f2"/><rect x="9" y="9" width="5" height="3" fill="#f2f2f2"/></svg>
<span class="t" style="left:64px;top:513.8px;color:#f4f4f4;letter-spacing:0.200px">基础面 &nbsp;&nbsp;(基础面)</span>
<svg class="abs" style="left:320.500px;top:512px" width="18" height="17"><path d="M9 0.500l2.500 5.600 6 .6-4.500 4.100 1.300 6-5.300-3.100-5.300 3.100 1.300-6L0.500 6.700l6-.6z" fill="#e0e0e4"/></svg>
<div class="cb" style="left:43px;top:546px;border-color:#606060;background:#353535"></div>
<svg class="abs" style="left:62px;top:546.5px" width="17" height="13" fill="none" stroke="#c2bfd2"><rect x="0.500" y="0.500" width="4" height="4"/><rect x="0.500" y="7.500" width="4" height="4"/><path d="M6.500 0.500h9.500M6.500 2.800h9.500M6.500 5h9.500M6.500 7.500h9.500M6.500 9.800h9.500M6.500 12h9.500" stroke-width="0.900"/></svg>
<span class="t" style="left:84px;top:545.8px;color:#f4f4f4;letter-spacing:0.200px">基础面 &nbsp;&nbsp;(楼层三维图)</span>
<svg class="abs" style="left:7px;top:581.5px" width="7" height="7"><path d="M6.500 0v6.500h-6.500z" fill="#f4f4f4"/></svg>
<div class="cb" style="left:23px;top:578px;border-color:#404040;background:#2b2b2b"></div>
<span class="t" style="left:64px;top:577.8px;color:#f4f4f4;letter-spacing:0.200px">系统三维图</span>
<div class="cb" style="left:43px;top:610px;border-color:#606060;background:#353535"></div>
<svg class="abs" style="left:63px;top:610px" width="13" height="13"><defs><linearGradient id="fg" x1="0" y1="0" x2="0" y2="1"><stop offset="0" stop-color="#e8e8e8"/><stop offset="1" stop-color="#b8b8b8"/></linearGradient></defs><rect width="13" height="13" fill="url(#fg)"/></svg>
<span class="t" style="left:84px;top:609.8px;color:#f4f4f4;letter-spacing:0.200px">全视图</span>
<div class="abs" style="left:0;top:917px;width:342px;height:61px;background:#3b4354"></div>
<div class="abs" style="left:0;top:917px;width:340px;height:56px;background:#3d3d3d;border-top:1px solid #5a5a5a;border-radius:0 0 4px 0"></div>
<div class="qb" style="left:45px;top:929px;width:115px;height:32.500px;border-color:#5e5a5e"></div><span class="t" style="left:93px;top:938px">视觉样式</span>
<div class="qb" style="left:159px;top:929px;width:28px;height:32.500px;border-color:#5e5a5e"></div>
<div class="qb" style="left:198px;top:929px;width:103px;height:32.500px;border-color:#5e5a5e"></div><span class="t" style="left:240px;top:938px">底图管理</span>
<div class="qb" style="left:300px;top:929px;width:28px;height:32.500px;border-color:#5e5a5e"></div>
<svg width="0" height="0" class="abs"><defs><linearGradient id="ag" x1="0" y1="0" x2="0" y2="1"><stop offset="0" stop-color="#9ad0ff"/><stop offset="1" stop-color="#2f80d8"/></linearGradient></defs></svg>
<svg class="abs" style="left:166.5px;top:938.500px" width="13" height="15"><path d="M6.200 0l6 7.500h-3.200v6.200h-5.600v-6.200h-3.200z" fill="url(#ag)"/></svg>
<svg class="abs" style="left:308px;top:938.500px" width="13" height="15"><path d="M6.200 0l6 7.500h-3.200v6.200h-5.600v-6.200h-3.200z" fill="url(#ag)"/></svg>
<svg class="abs" style="left:0px;top:928px" width="38" height="34"><path d="M14.500 14.500l3.500-3 11 12.500q1.800 3-.600 4.600-2.600 1.300-4.400-1.200z" fill="#a9abc8" stroke="#7c7e98" stroke-width="0.500"/><path d="M6 5.500q-2 5 1.500 8.500 4 3.500 9 1.500 1.500-4-1-8.500l-2.500-2.500 .500 5-3.500 2-3.500-2.500z" fill="#e4e6ec" stroke="#9a9ca8" stroke-width="0.500"/><path d="M18 6.500q6-4.500 11 1l2.500 3.500-3 2.500-2.500-3.500q-3-3.500-6.500-1.500z" fill="#e0e2e8" stroke="#9a9ca8" stroke-width="0.500"/><path d="M28.500 13.500l3.500-3 2 2.500-1 3-3 1.500z" fill="#b8bad4" stroke="#8a8ca0" stroke-width="0.500"/><path d="M19.500 14.500l3.500 3.500-13 12.500q-2.500 1.500-4.200-.500-1.500-2.300.500-4z" fill="#f0a030" stroke="#b86a18" stroke-width="0.600"/><path d="M18.500 17.500l-9 8.500" stroke="#f8dc50" stroke-width="1.600" stroke-linecap="round"/></svg>
<svg class="abs" style="left:64px;top:934px" width="23" height="23"><path d="M0.70 11.10A10.8 10.8 0 0 1 11.50 0.30L11.50 6.20A4.9 4.9 0 0 0 6.60 11.10Z" fill="#6ab0e8"/><path d="M11.50 0.30A10.8 10.8 0 0 1 19.77 4.16L15.25 7.95A4.9 4.9 0 0 0 11.50 6.20Z" fill="#8aa0c8"/><path d="M19.77 4.16A10.8 10.8 0 0 1 22.30 11.10L16.40 11.10A4.9 4.9 0 0 0 15.25 7.95Z" fill="#a878b0"/><path d="M22.30 11.10A10.8 10.8 0 0 1 18.44 19.37L14.65 14.85A4.9 4.9 0 0 0 16.40 11.10Z" fill="#e07a4a"/><path d="M18.44 19.37A10.8 10.8 0 0 1 11.50 21.90L11.50 16.00A4.9 4.9 0 0 0 14.65 14.85Z" fill="#d04a2c"/><path d="M11.50 21.90A10.8 10.8 0 0 1 3.86 18.74L8.04 14.56A4.9 4.9 0 0 0 11.50 16.00Z" fill="#f2c878"/><path d="M3.86 18.74A10.8 10.8 0 0 1 0.70 11.10L6.60 11.10A4.9 4.9 0 0 0 8.04 14.56Z" fill="#6cc040"/><circle cx="11.5" cy="11.1" r="10.3" fill="none" stroke="#ffffff" stroke-opacity="0.180" stroke-width="1"/></svg>
<svg class="abs" style="left:213px;top:934px" width="20" height="22"><rect x="1" y="1" width="18" height="20.500" rx="1" fill="#72bc3a"/><rect x="1" y="1" width="2" height="20.500" fill="#5aa02a"/><rect x="4" y="3.500" width="13.500" height="10" fill="#eaf6ff"/><rect x="5" y="4.500" width="11.500" height="8" fill="#8cc8f0"/><path d="M5 12.500l3.500-4 2.500 2.500 2-1.500 3.500 3z" fill="#f4fbff"/><path d="M3 19h14" stroke="#5aa02a" stroke-width="1.200"/></svg>
<div class="abs" style="left:0;top:978px;width:656px;height:22px;background:#212730"></div>
<svg class="abs" style="left:0;top:978px" width="200" height="22"><path d="M7.500 0L62 0L55.500 16Q54.500 17.800 52 17.800L19 17.800Q16 17.800 15 16Z" fill="#3c4252"/><path d="M62 0L116 0L109.500 16Q108.500 17.800 106 17.800L64 17.800Q61 17.800 60 16L59 14Z" fill="#2f3745"/><path d="M116 0L168 0L161.500 16Q160.500 17.800 158 17.800L117 17.800Q114 17.800 113 16L112 14Z" fill="#2f3745"/><path d="M64.500 0v17.500M104.500 0v17.500M118.500 0v17.500M159 0v17.500" stroke="#3a4252" stroke-width="1"/><path d="M174 2L186 2Q191.500 2 191.500 7.500L191.500 15.500L177 15.500Q171 15.500 171 9.500Z" fill="#2f3745"/><path d="M177.300 9.200h7.500M181 5.500v7.500" stroke="#c8c8c8" stroke-width="1.700"/></svg>
<span class="t" style="left:22px;top:979.500px;font-weight:bold;color:#fff">模型</span>
<span class="t" style="left:69px;top:979.500px;color:#d0d0d0">布局1</span>
<span class="t" style="left:122.500px;top:979.500px;color:#d0d0d0">布局2</span>
<svg class="abs" style="left:342px;top:174px" width="1298" height="744">
<rect width="1298" height="744" fill="#222831"/>
<rect x="370.5" y="198.5" width="421" height="421" fill="#808080" stroke="#1fc4d6" stroke-width="1.400"/>
<path d="M370.5 619.5L791.5 198.5" stroke="#c8c8c8" stroke-width="1.500"/>
<path d="M581.5 408V199M563.5 263.5L581.5 199L599 263.5" stroke="#2ea6dc" stroke-width="1" fill="none"/>
<circle cx="791.3" cy="198.5" r="8.700" fill="#c8c8cc"/>
<circle cx="370.29999999999995" cy="619.3" r="8.700" fill="#c8c8cc"/>
<circle cx="581.3" cy="408.29999999999995" r="8.700" fill="#eeeeee"/>
<rect x="557.0" y="384.0" width="1.400" height="1.400" fill="#d0503a"/>
<rect x="547.3" y="407.3" width="1.400" height="1.400" fill="#d0503a"/>
<rect x="612.6" y="407.6" width="1.400" height="1.400" fill="#d0503a"/>
<rect x="603.0" y="431.0" width="1.400" height="1.400" fill="#d0503a"/>
<rect x="579.6" y="440.3" width="1.400" height="1.400" fill="#d0503a"/>
<path d="M861 487.5H958M909.5 439V536" stroke="#f0f0f0" stroke-width="1"/>
<rect x="906.5" y="484.5" width="6" height="6" fill="#222831" stroke="#f0f0f0"/>
<path d="M18.5 674V727M15 722.5H69" stroke="#e8e8e8"/>
<rect x="14.5" y="718.5" width="9" height="9" fill="none" stroke="#e8e8e8"/>
<path d="M21 656l5.500 7l5.500 -7M26.5 663v6" stroke="#e8e8e8" fill="none"/>
<path d="M73 709l13 13M86 709l-13 13" stroke="#e8e8e8" fill="none"/>
<circle cx="1215.2" cy="106.39999999999998" r="53.700" fill="none" stroke="#434853" stroke-width="13.400"/>
<rect x="1189.5" y="80.5" width="51.500" height="51" fill="#a6a6ae"/>
<rect x="1199" y="90" width="32.500" height="32" fill="#9ba2b8"/>
<rect x="1191.5" y="194" width="47.500" height="16.500" rx="4" fill="#9095a5" stroke="#7b8090"/>
<path d="M1225.5 199.5h8l-4 4.500z" fill="#a3a8b8" stroke="#6d7282" stroke-width="0.800"/>
<rect x="1236.5" y="15.300000000000011" width="11" height="3.400" fill="#f0f0f0"/>
<path d="M1258 13.5h6v6h-6zM1260.5 13v-2.500h6v6h-2" stroke="#f0f0f0" stroke-width="1.900" fill="none"/>
<path d="M1277.8 11.800000000000011l7.800 7M1285.6 11.800000000000011l-7.800 7" stroke="#f0f0f0" stroke-width="2.400"/>
</svg>
<span class="t" style="left:346px;top:180px;color:#f0f0f0;letter-spacing:0.500px">[−][俯视][二维线框]</span>
<span class="t" style="left:1548px;top:215px;font-size:18px;line-height:20px;height:20px;color:#c0c0c0;font-weight:600;font-family:'Liberation Sans','Noto Serif CJK SC',serif;">北</span>
<span class="t" style="left:1548px;top:328px;font-size:18px;line-height:20px;height:20px;color:#c0c0c0;font-weight:600;font-family:'Liberation Sans','Noto Serif CJK SC',serif;">南</span>
<span class="t" style="left:1491px;top:271px;font-size:18px;line-height:20px;height:20px;color:#c0c0c0;font-weight:600;font-family:'Liberation Sans','Noto Serif CJK SC',serif;">西</span>
<span class="t" style="left:1604px;top:271px;font-size:18px;line-height:20px;height:20px;color:#c0c0c0;font-weight:600;font-family:'Liberation Sans','Noto Serif CJK SC',serif;">东</span>
<span class="t" style="left:1541px;top:264px;font-size:32px;line-height:32px;height:32px;color:#70768c;font-family:'Liberation Sans','Noto Serif CJK SC',serif;font-weight:400">上</span>
<span class="t" style="left:1537px;top:367px;font-size:11px;color:#5d6270">WCS</span>
<span class="t c" style="left:791px;width:400px;top:867.700px;font-size:18px;line-height:20px;height:20px;color:#e6e6e6;font-family:'Liberation Sans','Noto Serif CJK SC',serif;">当前视图：体系0_2层 视图_模板图</span>
<span class="t c" style="left:791px;width:400px;top:887px;font-size:18px;line-height:20px;height:20px;color:#e6e6e6;font-family:'Liberation Sans','Noto Serif CJK SC',serif;">当前楼层：体系0_标准层2_H=3.000m</span>
<div class="abs" style="left:1640px;top:170px;width:280px;height:810px;background:#3b4354"></div>
<div class="abs" style="left:1642px;top:176px;width:278px;height:22.500px;background:#2d3240;border-radius:4px 0 0 0"></div>
<svg class="abs" style="left:1647px;top:181px" width="6" height="12"><g fill="#a8adb8"><rect x="1" y="1" width="1" height="1"/><rect x="3" y="1" width="1" height="1"/><rect x="1" y="3" width="1" height="1"/><rect x="3" y="3" width="1" height="1"/><rect x="1" y="5" width="1" height="1"/><rect x="3" y="5" width="1" height="1"/><rect x="1" y="7" width="1" height="1"/><rect x="3" y="7" width="1" height="1"/><rect x="1" y="9" width="1" height="1"/><rect x="3" y="9" width="1" height="1"/></g></svg>
<span class="t" style="left:1657px;top:179px;color:#f4f4f4">属性面板</span>
<div class="abs" style="left:1642px;top:199.500px;width:276.500px;height:56.500px;background:#3d3d3d;border-radius:3px 0 0 0"></div>
<div class="abs" style="left:1645px;top:200px;width:20.500px;height:24px;background:#464646"></div>
<div class="abs" style="left:1666.500px;top:200.500px;width:231px;height:23px;border:1px solid #5a5a5a;background:#333"></div>
<span class="t" style="left:1671px;top:204.500px;color:#fff">无选择</span>
<svg class="abs" style="left:1885px;top:210px" width="8" height="5"><path d="M0 0h8l-4 4.500z" fill="#f0f0f0"/></svg>
<div class="abs" style="left:1900px;top:200px;width:20px;height:24px;background:#464646"></div>
<div class="abs" style="left:1642px;top:224px;width:276.500px;height:32px;border:1px solid #5a5a5a;background:#3d3d3d"></div>
<div class="abs" style="left:1674px;top:228px;width:241px;height:24px;border:1px solid #5e5e5e;background:#333"></div>
<span class="t" style="left:1679px;top:232.500px;color:#b8b8b8">搜索</span>
<svg class="abs" style="left:1650px;top:232px" width="16" height="16"><rect x="0.500" y="0.500" width="14" height="14" fill="#2b2b2b" stroke="#e0e0e0"/><rect x="2" y="2" width="5" height="5" fill="#4a86d0"/><rect x="8" y="2" width="5" height="5" fill="#4a86d0"/><rect x="2" y="8" width="5" height="5" fill="#4a86d0"/><rect x="8" y="8" width="5" height="5" fill="#4a86d0"/></svg>
<svg class="abs" style="left:1646px;top:203px" width="18" height="20"><rect x="1.500" y="1.500" width="12" height="13.500" rx="2" fill="#555" stroke="#c8c8c8" stroke-width="1.200"/><path d="M4 5h1.500M7 5h4M4 7.500h1.500M7 7.500h4M4 10h1.500M4 12.500h1.500" stroke="#d8d8d8"/><rect x="7" y="9" width="9" height="9" fill="#6ab43a"/><path d="M9 13.500l2 2 3.500-4" stroke="#2a5a18" stroke-width="1.200" fill="none"/></svg>
<svg class="abs" style="left:1901px;top:203px" width="19" height="20"><rect x="1.700" y="1.700" width="13.500" height="13.500" rx="1.500" fill="#2c3350" stroke="#d8d8d8" stroke-width="1.300"/><path d="M4 4.500h2M7.500 4.500h6" stroke="#4a68c0" stroke-width="1.600"/><path d="M4 7.500v6" stroke="#4a68c0" stroke-width="2"/><path d="M10.500 8v9.500l2.300-2.300 1.800 3.800 1.600-.8-1.800-3.700h3.300z" fill="#fff" stroke="#444" stroke-width="0.500"/></svg>
<div class="abs" style="left:1642px;top:256px;width:276.500px;height:646px;background:#292929;border-left:1px solid #505050;border-right:1px solid #505050"></div>
<div class="abs" style="left:1642px;top:902px;width:276.500px;height:71px;background:#3d3d3d;border:1px solid #5a5a5a"></div>
<div class="abs" style="left:342px;top:916px;width:1298px;height:62px;background:#2d3341;border-top:2px solid #3b4354"></div>
<div class="abs" style="left:367px;top:919px;width:1272px;height:37.500px;background:#c8c8c8;border-bottom:1px solid #1c1c1c"></div>
<div class="abs" style="left:367px;top:956.500px;width:1272px;height:20.500px;background:#fff;border-radius:0 0 3px 0"></div>
<span class="t" style="left:369.500px;top:925px;color:#000;line-height:15px;font-family:'Liberation Mono','Noto Sans Mono CJK SC','Noto Sans CJK SC',monospace;font-size:13px;">输入选项<span style="letter-spacing:-0.800px"> [</span>当前<span style="letter-spacing:-0.800px"> UCS(C)/UCS(U)/</span>世界<span style="letter-spacing:-0.800px">(W)] &lt;</span>当前<span style="letter-spacing:-0.800px"> UCS&gt;: c </span>正在重生成模型。</span>
<span class="t" style="left:369.500px;top:939px;color:#000;line-height:15px;font-family:'Liberation Mono','Noto Sans Mono CJK SC','Noto Sans CJK SC',monospace;font-size:13px;">命令<span style="letter-spacing:-0.800px">:</span></span>
<span class="t" style="left:404px;top:958.500px;color:#8c8c8c;font-style:italic;font-size:13px">键入命令</span>
<svg class="abs" style="left:344px;top:920px" width="56" height="56"><g fill="#e8e8e8"><rect x="2" y="3" width="2" height="2"/><rect x="5" y="3" width="2" height="2"/><rect x="8" y="3" width="2" height="2"/><rect x="11" y="3" width="2" height="2"/><rect x="14" y="3" width="2" height="2"/><rect x="17" y="3" width="2" height="2"/><rect x="2" y="6" width="2" height="2"/><rect x="5" y="6" width="2" height="2"/><rect x="8" y="6" width="2" height="2"/><rect x="11" y="6" width="2" height="2"/><rect x="14" y="6" width="2" height="2"/><rect x="17" y="6" width="2" height="2"/></g><path d="M5 15l8 8M13 15l-8 8" stroke="#e8e8e8" stroke-width="1.600"/><path d="M3 51l7-7a4 4 0 0 1 5-5l-2.500 2.500 2 2 2.500-2.500a4 4 0 0 1-5 5l-7 7z" fill="#e8e8e8"/><rect x="27.500" y="41.500" width="15" height="10" fill="#fff" stroke="#444"/><path d="M30 44l3 2.500-3 2.500M35 49.500h5" stroke="#333" fill="none"/><path d="M45 44.500h8l-4 4z" fill="#555"/></svg>
<div class="abs" style="left:656px;top:979px;width:1261px;height:21px;background:#3c4252"></div>
<span class="t" style="left:666px;top:984px;color:#f0f0f0">6389.7859, 5906.5156, 0.0000</span>
<span class="t" style="left:890px;top:984px;color:#f0f0f0">模型</span>
<span class="t" style="left:1484px;top:984px;color:#f0f0f0;letter-spacing:-0.450px">1:1 / 100%</span>
<span class="t" style="left:1653px;top:984px;color:#f0f0f0">小数</span>
<svg class="abs" style="left:656px;top:979px" width="1264" height="21">
<rect x="229.5" y="1" width="2.200" height="20" fill="#2a2f3b"/>
<rect x="261.5" y="1" width="2.200" height="20" fill="#2a2f3b"/>
<rect x="328.5" y="1" width="2.200" height="20" fill="#2a2f3b"/>
<rect x="354.5" y="1" width="2.200" height="20" fill="#2a2f3b"/>
<rect x="379.5" y="1" width="2.200" height="20" fill="#2a2f3b"/>
<rect x="548.5" y="1" width="2.200" height="20" fill="#2a2f3b"/>
<rect x="573.5" y="1" width="2.200" height="20" fill="#2a2f3b"/>
<rect x="599.5" y="1" width="2.200" height="20" fill="#2a2f3b"/>
<rect x="641.5" y="1" width="2.200" height="20" fill="#2a2f3b"/>
<rect x="748.5" y="1" width="2.200" height="20" fill="#2a2f3b"/>
<rect x="897.5" y="1" width="2.200" height="20" fill="#2a2f3b"/>
<rect x="938.5" y="1" width="2.200" height="20" fill="#2a2f3b"/>
<rect x="966.5" y="1" width="2.200" height="20" fill="#2a2f3b"/>
<rect x="1064.5" y="1" width="2.200" height="20" fill="#2a2f3b"/>
<rect x="1090.5" y="1" width="2.200" height="20" fill="#2a2f3b"/>
<rect x="1132.5" y="1" width="2.200" height="20" fill="#2a2f3b"/>
<rect x="1210.5" y="1" width="2.200" height="20" fill="#2a2f3b"/>
<rect x="487" y="2" width="22.5" height="20" fill="#5b92c5"/>
<rect x="511.5" y="2" width="21.0" height="20" fill="#5b92c5"/>
<rect x="710" y="2" width="21" height="20" fill="#5b92c5"/>
<rect x="752.5" y="2" width="21.0" height="20" fill="#5b92c5"/>
<rect x="1161.5" y="2" width="22.5" height="20" fill="#5b92c5"/>
<path d="M186.5 5h17l-6.500 16.500h-17z" fill="#d2d2d4"/>
<g stroke="#7e7e7e" stroke-width="1" fill="none"><path d="M204.5 22v-20.500h23.500v20.500M209 1.500v20M214 1.500v20M220 1.500v20M225 1.500v20M204.5 5.700h23.500M204.5 10.600h23.500M204.5 15.500h23.500M204.5 20h23.500"/></g><path d="M213.70000000000005 5.300v12.700l2.800-2.500 2.200 5 2-1-2.200-4.800h4z" fill="#b4b8c6"/>
<path d="M271.5 4v17M276 4v17M280.5 4v17M268 8.500h16M268 13h16M268 17.500h16" stroke="#e8e8e8" stroke-width="1.200" fill="none"/>
<rect x="294" y="6" width="2" height="2" fill="#e8e8e8"/><rect x="294" y="11" width="2" height="2" fill="#e8e8e8"/><rect x="294" y="16" width="2" height="2" fill="#e8e8e8"/><rect x="299" y="6" width="2" height="2" fill="#e8e8e8"/><rect x="299" y="11" width="2" height="2" fill="#e8e8e8"/><rect x="299" y="16" width="2" height="2" fill="#e8e8e8"/><rect x="304" y="6" width="2" height="2" fill="#e8e8e8"/><rect x="304" y="11" width="2" height="2" fill="#e8e8e8"/><rect x="304" y="16" width="2" height="2" fill="#e8e8e8"/>
<path d="M316.5 10h8l-4 4.500z" fill="#e8e8e8"/>
<path d="M433.5 10h8l-4 4.500z" fill="#e8e8e8"/>
<path d="M473 10h8l-4 4.500z" fill="#e8e8e8"/>
<path d="M538 10h8l-4 4.500z" fill="#e8e8e8"/>
<path d="M628 10h8l-4 4.500z" fill="#e8e8e8"/>
<path d="M696 10h8l-4 4.500z" fill="#e8e8e8"/>
<path d="M736 10h8l-4 4.500z" fill="#e8e8e8"/>
<path d="M885 10h8l-4 4.500z" fill="#e8e8e8"/>
<path d="M928 10h8l-4 4.500z" fill="#e8e8e8"/>
<path d="M1052.5 10h8l-4 4.500z" fill="#e8e8e8"/>
<path d="M1121 10h8l-4 4.500z" fill="#e8e8e8"/>
<path d="M343.5 14v-8.500h6.500v5.500h-6.500" fill="none" stroke="#e8e8e8" stroke-width="1.200"/><rect x="335" y="14" width="8" height="7" fill="#e8e8e8"/>
<path d="M360 9.500h8M364 5.500v8" stroke="#e8e8e8" stroke-width="1.200"/><rect x="367" y="14.500" width="10" height="4.500" fill="#e8e8e8"/>
<path d="M386 4v17M385 20.500h16M386 14.500h5.500v6" fill="none" stroke="#e8e8e8" stroke-width="1.300"/>
<circle cx="417" cy="13" r="6.800" fill="none" stroke="#e8e8e8" stroke-width="1.200"/><path d="M417 13h8M417 13l7.500-7.500" stroke="#e8e8e8" stroke-width="1.200"/>
<path d="M450 4.500l12 15" stroke="#e8953a" stroke-width="1.200"/><path d="M456.5 4v17" stroke="#7ac060" stroke-width="1.200"/><rect x="455" y="11" width="3" height="3" fill="#3b4252" stroke="#e8e8e8" stroke-width="0.800"/>
<path d="M490 19.500h16M490 19.500l15-12" stroke="#fff" stroke-width="1.300" fill="none"/><rect x="496.5" y="12" width="3" height="3" fill="#fff"/>
<path d="M516.5 21v-13.500h14v13.500" fill="none" stroke="#fff" stroke-width="1.300"/><rect x="514.5" y="5.500" width="4" height="4" fill="#5b92c5" stroke="#fff" stroke-width="1.100"/>
<path d="M555 7h16M555 11h9M555 15h16M555 19h9" stroke="#e8e8e8" stroke-width="1.600"/>
<rect x="587" y="11" width="10" height="10" fill="#9cd49c"/><path d="M581 6.500h5M583.5 4v5M586 9.500h9M585.5 10v9" stroke="#e8e8e8" stroke-width="1" fill="none"/>
<path d="M609 10h10v10h-10zM609 10l4-4.500h10l-4 4.500M623 5.500v10l-4 4.500" fill="none" stroke="#e8e8e8" stroke-width="1.100"/><rect x="606.5" y="17.500" width="4" height="4" fill="#3b4252" stroke="#e8953a" stroke-width="1"/>
<path d="M652.5 4v14.500h12M650 7l2.500-3.500 2.500 3.500M662 16l3 2.500-3 2.500" fill="none" stroke="#e8e8e8" stroke-width="1.200"/><path d="M660 6l-2.500 4h3l-2 4" fill="none" stroke="#e8e8e8" stroke-width="1.200"/>
<path d="M674 8.500h10v11h-10zM674 8.500l3.500-3.500h10l-3.500 3.500M687.5 5v11l-3.500 3.500" fill="none" stroke="#e8e8e8" stroke-width="1.100" stroke-dasharray="4 1.500"/><g fill="#6ab8f8"><rect x="672" y="7" width="3" height="3"/><rect x="682.5" y="7" width="3" height="3"/><rect x="672" y="18" width="3" height="3"/><rect x="682.5" y="18" width="3" height="3"/></g>
<path d="M720.5 5.500l7 4v8.500l-7 4-7-4v-8.500zM720.5 5.500v8.500l-7 4M720.5 14l7 4" fill="none" stroke="#fff" stroke-width="1.100"/><g fill="#5b92c5" stroke="#fff" stroke-width="1"><circle cx="720.5" cy="5.500" r="1.800"/><circle cx="720.5" cy="14" r="1.600"/><circle cx="713.8" cy="17.800" r="1.600"/><circle cx="727.2" cy="17.800" r="1.600"/></g>
<path d="M762.0 5l2.800 6.500-.600 1.700 4.600 7.800v1h-3.400l-3.400-5.500-3.400 5.500h-3.400v-1l4.600-7.800-.600-1.700z" fill="#fff"/>
<circle cx="767.75" cy="9" r="2.600" fill="none" stroke="#fff" stroke-width="1.300"/>
<path d="M785.9000000000001 5l2.800 6.500-.600 1.700 4.600 7.800v1h-3.400l-3.400-5.500-3.400 5.500h-3.400v-1l4.600-7.800-.600-1.700z" fill="#dcdcdc"/>
<path d="M792.5 5l-3.300 3.800h2.600l-2.600 4.200 4.800-5h-2.600l2.200-3z" fill="#dcdcdc"/>
<path d="M811.0 5l2.800 6.500-.600 1.700 4.600 7.800v1h-3.400l-3.400-5.500-3.400 5.500h-3.400v-1l4.600-7.800-.600-1.700z" fill="#dcdcdc"/>
<path d="M919.18 10.16L919.18 12.84L916.97 12.72L916.23 14.50L917.88 15.99L915.99 17.88L914.50 16.23L912.72 16.97L912.84 19.18L910.16 19.18L910.28 16.97L908.50 16.23L907.01 17.88L905.12 15.99L906.77 14.50L906.03 12.72L903.82 12.84L903.82 10.16L906.03 10.28L906.77 8.50L905.12 7.01L907.01 5.12L908.50 6.77L910.28 6.03L910.16 3.82L912.84 3.82L912.72 6.03L914.50 6.77L915.99 5.12L917.88 7.01L916.23 8.50L916.97 10.28Z" fill="#d8d8d8"/><circle cx="911.5" cy="11.5" r="2.8" fill="#3b4252"/>
<path d="M945 12.500h16M953 4.500v16" stroke="#e8e8e8" stroke-width="1.500"/>
<rect x="976" y="4" width="9" height="17" fill="#c8c8c8"/><path d="M981 6.500h4M982.5 9h2.500M981 11.500h4M982.5 14h2.500M981 16.500h4M982.5 19h2.500" stroke="#3b4252" stroke-width="1"/>
<rect x="1071.5" y="4.500" width="13" height="17" fill="none" stroke="#e8e8e8" stroke-width="1.100"/><path d="M1071.5 7h13" stroke="#e8e8e8" stroke-width="1.500"/><path d="M1074 11h2M1077.5 11h5M1074 14.500h2M1077.5 14.500h5M1074 18h2M1077.5 18h5" stroke="#e8e8e8" stroke-width="1.300"/>
<path d="M1098.0 18v-12.500h14.500v7" fill="none" stroke="#e8e8e8" stroke-width="1.200"/><path d="M1098.0 6h14.500" stroke="#e8e8e8" stroke-width="2"/><path d="M1098.0 18h8" stroke="#e8e8e8" stroke-width="1.200"/><rect x="1107.0" y="15" width="6" height="6" fill="#e8e8e8"/><path d="M1109.5 15v-2a2 2 0 0 1 4 0v1" fill="none" stroke="#e8e8e8" stroke-width="1.100"/>
<rect x="1137.5" y="4.500" width="5.500" height="5.500" fill="none" stroke="#e8e8e8" stroke-width="1.100"/><circle cx="1150.5" cy="10.500" r="3" fill="none" stroke="#e8e8e8" stroke-width="1.100"/><path d="M1140.5 21l3.500-6 3.500 6z" fill="none" stroke="#e8e8e8" stroke-width="1.100"/>
<circle cx="1173" cy="14" r="8" fill="none" stroke="#fff" stroke-width="1.300"/><path d="M1178 9l-5.500 7-1.500 3 3-1.500 5.500-7z" fill="#fff"/>
<path d="M1193 4h8l4 4v10h-12z" fill="#2a70c0"/><rect x="1190" y="14" width="9" height="7" fill="#f0d838"/><path d="M1192.5 8.500h8M1196.5 5v10" stroke="#fff" stroke-width="1"/><circle cx="1196.5" cy="8.500" r="1.600" fill="#2a70c0" stroke="#fff" stroke-width="0.800"/><path d="M1199.5 17l3 3 5-6" fill="none" stroke="#5ab038" stroke-width="2"/>
<rect x="1217.5" y="6.500" width="15.500" height="12" fill="none" stroke="#e8e8e8" stroke-width="1.100"/><path d="M1226.5 11l4-2.500M1227.5 8.300h3.200v3M1224 13.500l-4 2.500M1223 16.200h-3.200v-3" fill="none" stroke="#e8e8e8" stroke-width="1"/>
<path d="M1241 6.500h16M1241 12.500h16M1241 18.500h16" stroke="#e8e8e8" stroke-width="1.800"/>
</svg>
<span class="t" style="left:841.500px;top:984.500px;color:#6c717c;font-size:12px;font-style:italic">板</span>
</body></html>
